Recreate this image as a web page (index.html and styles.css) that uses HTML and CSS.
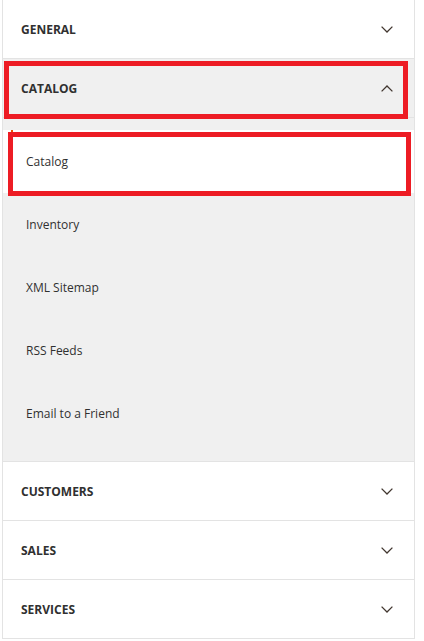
FILE: index.html
```html
<!DOCTYPE html>
<html lang="en">
<head>
<meta charset="utf-8">
<title>Configuration</title>
<link rel="stylesheet" href="styles.css">
</head>
<body>
<div class="config">
  <div class="section">
    <div class="head"><span class="title">GENERAL</span>
      <svg class="chev" width="12" height="7" viewBox="0 0 12 7"><polyline points="0.6,0.6 6,6 11.4,0.6"/></svg>
    </div>
  </div>
  <div class="section open">
    <div class="head"><span class="title">CATALOG</span>
      <svg class="chev" width="12" height="7" viewBox="0 0 12 7"><polyline points="0.6,6.4 6,1 11.4,6.4"/></svg>
      <span class="mark mark-head"></span>
    </div>
    <ul class="sub">
      <li class="item active"><span class="edge"></span>Catalog<span class="mark mark-item"></span></li>
      <li class="item">Inventory</li>
      <li class="item">XML Sitemap</li>
      <li class="item">RSS Feeds</li>
      <li class="item">Email to a Friend</li>
    </ul>
  </div>
  <div class="section">
    <div class="head"><span class="title">CUSTOMERS</span>
      <svg class="chev" width="12" height="7" viewBox="0 0 12 7"><polyline points="0.6,0.6 6,6 11.4,0.6"/></svg>
    </div>
  </div>
  <div class="section">
    <div class="head"><span class="title">SALES</span>
      <svg class="chev" width="12" height="7" viewBox="0 0 12 7"><polyline points="0.6,0.6 6,6 11.4,0.6"/></svg>
    </div>
  </div>
  <div class="section">
    <div class="head"><span class="title">SERVICES</span>
      <svg class="chev" width="12" height="7" viewBox="0 0 12 7"><polyline points="0.6,0.6 6,6 11.4,0.6"/></svg>
    </div>
  </div>
</div>
</body>
</html>
```
FILE: styles.css
```css
html, body {
  margin: 0;
  padding: 0;
  background: #ffffff;
}
body {
  font-family: "Open Sans", "Liberation Sans", sans-serif;
  color: #303030;
}
.config {
  margin-left: 2px;
  width: 413px;
  box-sizing: border-box;
  border-left: 1px solid #e3e3e3;
  border-right: 1px solid #e3e3e3;
}
.section {
  border-bottom: 1px solid #e3e3e3;
}
.head {
  position: relative;
  height: 58px;
  display: flex;
  align-items: center;
  justify-content: space-between;
  padding: 0 21px 0 18px;
  background: #ffffff;
}
.section.open .head {
  background: #f0f0f0;
  border-bottom: 1px solid #e3e3e3;
}
.title {
  font-size: 12px;
  font-weight: 700;
  color: #303030;
}
.chev {
  display: block;
}
.chev polyline {
  fill: none;
  stroke: #41362f;
  stroke-width: 1.3;
}
.sub {
  list-style: none;
  margin: 0;
  padding: 12px 0 16px;
  background: #f0f0f0;
}
.item {
  position: relative;
  height: 63px;
  display: flex;
  align-items: center;
  padding-left: 23px;
  font-size: 12px;
  color: #303030;
}
.item.active {
  background: #ffffff;
}
.edge {
  position: absolute;
  left: 8px;
  top: 0;
  width: 2px;
  height: 4px;
  background: #eb5202;
}
.mark {
  position: absolute;
  box-sizing: border-box;
  border: 5px solid #ed1c24;
  pointer-events: none;
}
.mark-head {
  left: 1px;
  top: 2px;
  width: 404px;
  height: 58px;
}
.mark-item {
  left: 5px;
  top: 2px;
  width: 403px;
  height: 64px;
}
```
